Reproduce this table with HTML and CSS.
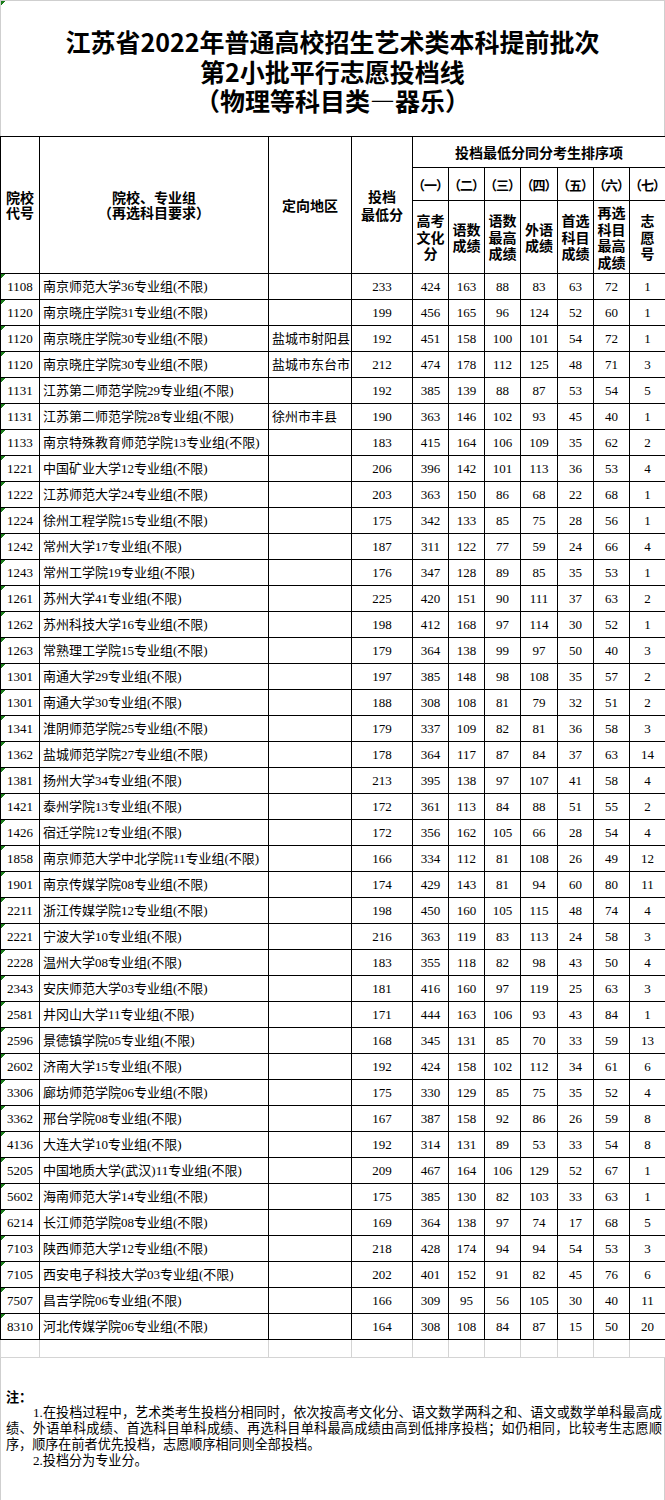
FILE: index.html
```html
<!DOCTYPE html>
<html lang="zh-CN">
<head>
<meta charset="utf-8">
<title>江苏省2022年普通高校招生艺术类本科提前批次第2小批平行志愿投档线</title>
<link rel="stylesheet" href="styles.css">
</head>
<body>
<div class="sheet">
  <div class="title">
    <div>江苏省2022年普通高校招生艺术类本科提前批次</div>
    <div>第2小批平行志愿投档线</div>
    <div>（物理等科目类—器乐）</div>
  </div>
  <table class="grid">
    <colgroup>
      <col class="c-code"><col class="c-name"><col class="c-area"><col class="c-min">
      <col class="c-s"><col class="c-s"><col class="c-s"><col class="c-s4"><col class="c-s"><col class="c-s"><col class="c-s">
    </colgroup>
    <thead>
      <tr class="h1">
        <th rowspan="3">院校<br>代号</th>
        <th rowspan="3">院校、专业组<br>（再选科目要求）</th>
        <th rowspan="3">定向地区</th>
        <th rowspan="3" class="minh">投档<br>最低分</th>
        <th colspan="7">投档最低分同分考生排序项</th>
      </tr>
      <tr class="h2">
        <th class="ord">（一）</th><th class="ord">（二）</th><th class="ord">（三）</th><th class="ord">（四）</th><th class="ord">（五）</th><th class="ord">（六）</th><th class="ord">（七）</th>
      </tr>
      <tr class="h3">
        <th class="lab">高考<br>文化<br>分</th>
        <th class="lab">语数<br>成绩</th>
        <th class="lab">语数<br>最高<br>成绩</th>
        <th class="lab">外语<br>成绩</th>
        <th class="lab">首选<br>科目<br>成绩</th>
        <th class="lab">再选<br>科目<br>最高<br>成绩</th>
        <th class="lab">志<br>愿<br>号</th>
      </tr>
    </thead>
    <tbody>
      <tr><td class="code">1108</td><td class="name">南京师范大学36专业组(不限)</td><td class="area"></td><td>233</td><td>424</td><td>163</td><td>88</td><td>83</td><td>63</td><td>72</td><td>1</td></tr>
      <tr><td class="code">1120</td><td class="name">南京晓庄学院31专业组(不限)</td><td class="area"></td><td>199</td><td>456</td><td>165</td><td>96</td><td>124</td><td>52</td><td>60</td><td>1</td></tr>
      <tr><td class="code">1120</td><td class="name">南京晓庄学院30专业组(不限)</td><td class="area">盐城市射阳县</td><td>192</td><td>451</td><td>158</td><td>100</td><td>101</td><td>54</td><td>72</td><td>1</td></tr>
      <tr><td class="code">1120</td><td class="name">南京晓庄学院30专业组(不限)</td><td class="area">盐城市东台市</td><td>212</td><td>474</td><td>178</td><td>112</td><td>125</td><td>48</td><td>71</td><td>3</td></tr>
      <tr><td class="code">1131</td><td class="name">江苏第二师范学院29专业组(不限)</td><td class="area"></td><td>192</td><td>385</td><td>139</td><td>88</td><td>87</td><td>53</td><td>54</td><td>5</td></tr>
      <tr><td class="code">1131</td><td class="name">江苏第二师范学院28专业组(不限)</td><td class="area">徐州市丰县</td><td>190</td><td>363</td><td>146</td><td>102</td><td>93</td><td>45</td><td>40</td><td>1</td></tr>
      <tr><td class="code">1133</td><td class="name">南京特殊教育师范学院13专业组(不限)</td><td class="area"></td><td>183</td><td>415</td><td>164</td><td>106</td><td>109</td><td>35</td><td>62</td><td>2</td></tr>
      <tr><td class="code">1221</td><td class="name">中国矿业大学12专业组(不限)</td><td class="area"></td><td>206</td><td>396</td><td>142</td><td>101</td><td>113</td><td>36</td><td>53</td><td>4</td></tr>
      <tr><td class="code">1222</td><td class="name">江苏师范大学24专业组(不限)</td><td class="area"></td><td>203</td><td>363</td><td>150</td><td>86</td><td>68</td><td>22</td><td>68</td><td>1</td></tr>
      <tr><td class="code">1224</td><td class="name">徐州工程学院15专业组(不限)</td><td class="area"></td><td>175</td><td>342</td><td>133</td><td>85</td><td>75</td><td>28</td><td>56</td><td>1</td></tr>
      <tr><td class="code">1242</td><td class="name">常州大学17专业组(不限)</td><td class="area"></td><td>187</td><td>311</td><td>122</td><td>77</td><td>59</td><td>24</td><td>66</td><td>4</td></tr>
      <tr><td class="code">1243</td><td class="name">常州工学院19专业组(不限)</td><td class="area"></td><td>176</td><td>347</td><td>128</td><td>89</td><td>85</td><td>35</td><td>53</td><td>1</td></tr>
      <tr><td class="code">1261</td><td class="name">苏州大学41专业组(不限)</td><td class="area"></td><td>225</td><td>420</td><td>151</td><td>90</td><td>111</td><td>37</td><td>63</td><td>2</td></tr>
      <tr><td class="code">1262</td><td class="name">苏州科技大学16专业组(不限)</td><td class="area"></td><td>198</td><td>412</td><td>168</td><td>97</td><td>114</td><td>30</td><td>52</td><td>1</td></tr>
      <tr><td class="code">1263</td><td class="name">常熟理工学院15专业组(不限)</td><td class="area"></td><td>179</td><td>364</td><td>138</td><td>99</td><td>97</td><td>50</td><td>40</td><td>3</td></tr>
      <tr><td class="code">1301</td><td class="name">南通大学29专业组(不限)</td><td class="area"></td><td>197</td><td>385</td><td>148</td><td>98</td><td>108</td><td>35</td><td>57</td><td>2</td></tr>
      <tr><td class="code">1301</td><td class="name">南通大学30专业组(不限)</td><td class="area"></td><td>188</td><td>308</td><td>108</td><td>81</td><td>79</td><td>32</td><td>51</td><td>2</td></tr>
      <tr><td class="code">1341</td><td class="name">淮阴师范学院25专业组(不限)</td><td class="area"></td><td>179</td><td>337</td><td>109</td><td>82</td><td>81</td><td>36</td><td>58</td><td>3</td></tr>
      <tr><td class="code">1362</td><td class="name">盐城师范学院27专业组(不限)</td><td class="area"></td><td>178</td><td>364</td><td>117</td><td>87</td><td>84</td><td>37</td><td>63</td><td>14</td></tr>
      <tr><td class="code">1381</td><td class="name">扬州大学34专业组(不限)</td><td class="area"></td><td>213</td><td>395</td><td>138</td><td>97</td><td>107</td><td>41</td><td>58</td><td>4</td></tr>
      <tr><td class="code">1421</td><td class="name">泰州学院13专业组(不限)</td><td class="area"></td><td>172</td><td>361</td><td>113</td><td>84</td><td>88</td><td>51</td><td>55</td><td>2</td></tr>
      <tr><td class="code">1426</td><td class="name">宿迁学院12专业组(不限)</td><td class="area"></td><td>172</td><td>356</td><td>162</td><td>105</td><td>66</td><td>28</td><td>54</td><td>4</td></tr>
      <tr><td class="code">1858</td><td class="name">南京师范大学中北学院11专业组(不限)</td><td class="area"></td><td>166</td><td>334</td><td>112</td><td>81</td><td>108</td><td>26</td><td>49</td><td>12</td></tr>
      <tr><td class="code">1901</td><td class="name">南京传媒学院08专业组(不限)</td><td class="area"></td><td>174</td><td>429</td><td>143</td><td>81</td><td>94</td><td>60</td><td>80</td><td>11</td></tr>
      <tr><td class="code">2211</td><td class="name">浙江传媒学院12专业组(不限)</td><td class="area"></td><td>198</td><td>450</td><td>160</td><td>105</td><td>115</td><td>48</td><td>74</td><td>4</td></tr>
      <tr><td class="code">2221</td><td class="name">宁波大学10专业组(不限)</td><td class="area"></td><td>216</td><td>363</td><td>119</td><td>83</td><td>113</td><td>24</td><td>58</td><td>3</td></tr>
      <tr><td class="code">2228</td><td class="name">温州大学08专业组(不限)</td><td class="area"></td><td>183</td><td>355</td><td>118</td><td>82</td><td>98</td><td>43</td><td>50</td><td>4</td></tr>
      <tr><td class="code">2343</td><td class="name">安庆师范大学03专业组(不限)</td><td class="area"></td><td>181</td><td>416</td><td>160</td><td>97</td><td>119</td><td>25</td><td>63</td><td>3</td></tr>
      <tr><td class="code">2581</td><td class="name">井冈山大学11专业组(不限)</td><td class="area"></td><td>171</td><td>444</td><td>163</td><td>106</td><td>93</td><td>43</td><td>84</td><td>1</td></tr>
      <tr><td class="code">2596</td><td class="name">景德镇学院05专业组(不限)</td><td class="area"></td><td>168</td><td>345</td><td>131</td><td>85</td><td>70</td><td>33</td><td>59</td><td>13</td></tr>
      <tr><td class="code">2602</td><td class="name">济南大学15专业组(不限)</td><td class="area"></td><td>192</td><td>424</td><td>158</td><td>102</td><td>112</td><td>34</td><td>61</td><td>6</td></tr>
      <tr><td class="code">3306</td><td class="name">廊坊师范学院06专业组(不限)</td><td class="area"></td><td>175</td><td>330</td><td>129</td><td>85</td><td>75</td><td>35</td><td>52</td><td>4</td></tr>
      <tr><td class="code">3362</td><td class="name">邢台学院08专业组(不限)</td><td class="area"></td><td>167</td><td>387</td><td>158</td><td>92</td><td>86</td><td>26</td><td>59</td><td>8</td></tr>
      <tr><td class="code">4136</td><td class="name">大连大学10专业组(不限)</td><td class="area"></td><td>192</td><td>314</td><td>131</td><td>89</td><td>53</td><td>33</td><td>54</td><td>8</td></tr>
      <tr><td class="code">5205</td><td class="name">中国地质大学(武汉)11专业组(不限)</td><td class="area"></td><td>209</td><td>467</td><td>164</td><td>106</td><td>129</td><td>52</td><td>67</td><td>1</td></tr>
      <tr><td class="code">5602</td><td class="name">海南师范大学14专业组(不限)</td><td class="area"></td><td>175</td><td>385</td><td>130</td><td>82</td><td>103</td><td>33</td><td>63</td><td>1</td></tr>
      <tr><td class="code">6214</td><td class="name">长江师范学院08专业组(不限)</td><td class="area"></td><td>169</td><td>364</td><td>138</td><td>97</td><td>74</td><td>17</td><td>68</td><td>5</td></tr>
      <tr><td class="code">7103</td><td class="name">陕西师范大学12专业组(不限)</td><td class="area"></td><td>218</td><td>428</td><td>174</td><td>94</td><td>94</td><td>54</td><td>53</td><td>3</td></tr>
      <tr><td class="code">7105</td><td class="name">西安电子科技大学03专业组(不限)</td><td class="area"></td><td>202</td><td>401</td><td>152</td><td>91</td><td>82</td><td>45</td><td>76</td><td>6</td></tr>
      <tr><td class="code">7507</td><td class="name">昌吉学院06专业组(不限)</td><td class="area"></td><td>166</td><td>309</td><td>95</td><td>56</td><td>105</td><td>30</td><td>40</td><td>11</td></tr>
      <tr><td class="code">8310</td><td class="name">河北传媒学院06专业组(不限)</td><td class="area"></td><td>164</td><td>308</td><td>108</td><td>84</td><td>87</td><td>15</td><td>50</td><td>20</td></tr>
      <tr class="blank"><td></td><td></td><td></td><td></td><td></td><td></td><td></td><td></td><td></td><td></td><td></td></tr>
    </tbody>
  </table>
  <div class="notes">
    <div class="note-head">注：</div>
    <div class="line just indent">1.在投档过程中，艺术类考生投档分相同时，依次按高考文化分、语文数学两科之和、语文或数学单科最高成</div>
    <div class="line just">绩、外语单科成绩、首选科目单科成绩、再选科目单科最高成绩由高到低排序投档；如仍相同，比较考生志愿顺</div>
    <div class="line">序，顺序在前者优先投档，志愿顺序相同则全部投档。</div>
    <div class="line indent">2.投档分为专业分。</div>
  </div>
</div>
</body>
</html>
```

FILE: styles.css
```css
* {
  box-sizing: border-box;
}

html,
body {
  margin: 0;
  padding: 0;
  background: #fff;
}

body {
  width: 665px;
  color: #000;
  font-family: "Liberation Serif", "Noto Sans CJK SC", serif;
}

.sheet {
  width: 665px;
}

.title {
  height: 136px;
  border: 1px solid #cfcfcf;
  border-bottom: none;
  padding-top: 26px;
  text-align: center;
  font-family: "Noto Sans CJK SC", sans-serif;
  font-weight: 700;
  font-size: 25px;
  line-height: 29.5px;
  background: linear-gradient(135deg, #1b7d1b 0, #1b7d1b 3px, transparent 3px) no-repeat;
}

.grid {
  width: 665px;
  border-collapse: collapse;
  table-layout: fixed;
}

.c-code { width: 39px; }
.c-name { width: 229px; }
.c-area { width: 83px; }
.c-min { width: 61px; }
.c-s { width: 36px; }
.c-s4 { width: 37px; }

.grid th,
.grid td {
  border: 1px solid #000;
  padding: 0;
  vertical-align: middle;
  text-align: center;
  overflow: hidden;
  white-space: nowrap;
}

.grid th {
  font-family: "Noto Sans CJK SC", sans-serif;
  font-weight: 700;
  font-size: 14px;
  line-height: 15px;
}

.grid th.minh {
  line-height: 18px;
}

.h1 th { height: 31px; }
.h2 th { height: 33px; }
.h3 th { height: 73px; }

.grid th.ord {
  font-size: 13px;
  letter-spacing: -1px;
  text-indent: -1px;
}

.grid th.lab {
  font-size: 14px;
  line-height: 16.5px;
}

.grid td {
  height: 26px;
  font-size: 13px;
  line-height: 16px;
}

.grid td.code {
  background: linear-gradient(135deg, #1b7d1b 0, #1b7d1b 3px, transparent 3px) no-repeat;
}

.grid td.name,
.grid td.area {
  text-align: left;
  padding-left: 3px;
}

.grid tr.blank td {
  height: 18px;
  border-color: #d4d4d4;
}

.notes {
  height: 145px;
  border: 1px solid #cfcfcf;
  border-top: none;
  padding: 31px 2px 0 5px;
  font-family: "Liberation Serif", "Noto Sans CJK SC", serif;
  font-size: 13.1px;
  line-height: 16px;
  overflow: hidden;
}

.note-head {
  font-family: "Noto Sans CJK SC", sans-serif;
  font-weight: 700;
}

.line {
  white-space: nowrap;
}

.line.indent {
  padding-left: 27px;
}

.line.just {
  white-space: normal;
  text-align: justify;
  text-align-last: justify;
}
```
